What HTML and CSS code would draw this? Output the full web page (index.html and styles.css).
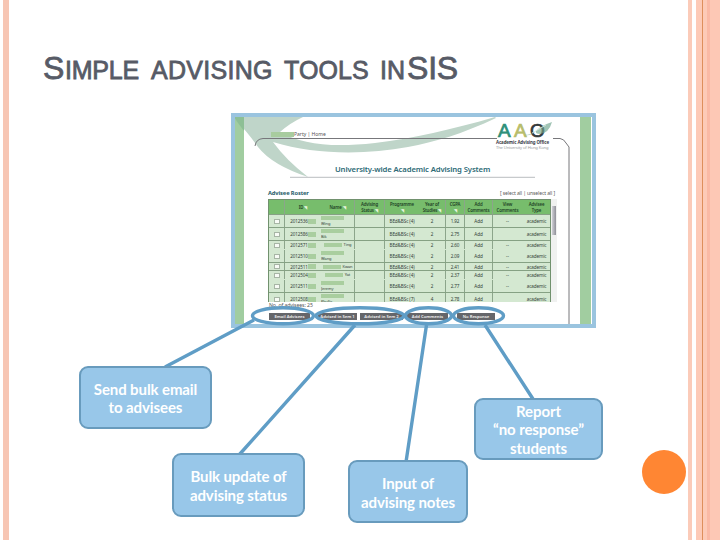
FILE: index.html
```
<!DOCTYPE html>
<html lang="en">
<head>
<meta charset="utf-8">
<title>Simple advising tools in SIS</title>
<link rel="stylesheet" href="styles.css">
</head>
<body>
<div class="slide">
  <div class="rail-left"></div>
  <main class="content">
    <h1><span class="cap">S</span><span class="w1">IMPLE</span><span class="w2">ADVISING</span><span class="w3">TOOLS</span><span class="w4">IN</span><span class="cap sis">SIS</span></h1>
    <section class="shot">
      <div class="strip"></div>
      <svg class="art" width="357" height="207" viewBox="235 117 357 207">
        <path d="M235 117H303Q290 123 280 132C302 144 330 148 375 143C415 138 450 130 495 117L496 118C462 134 435 142 408 147C365 155 315 155 273 142Q286 160 308 177Q272 165 258 147Q249 134 235 119Z" fill="#bfd5c9"/>
        <path d="M235 117h9v14l-9-12z" fill="#8dbf95"/>
        <path d="M255 146Q256 139 263 138.500H497M553 138.500H560Q564 139 566 143L569 147V324" fill="none" stroke="#77777b" stroke-width="1"/>
        <path d="M290 177.300H535" stroke="#a7acae" stroke-width=".8"/>
      </svg>
      <div class="page">
        <header class="top">
          <div class="user"><i></i><span>Party | Home</span></div>
          <div class="brand">
            <div class="logo"><span class="a1">A</span><span class="a2">A</span><span class="o">O</span>
              <svg class="leaf" width="28" height="15" viewBox="0 0 28 15"><path d="M0 13Q8 13 13 8Q18 3 28 0Q25 11 16 12Q11 12 12 9Q8 14 0 13Z" fill="#6fa58e" opacity=".65"/><path d="M8 11L22 3" stroke="#dceee5" stroke-width=".8"/></svg>
            </div>
            <b>Academic Advising Office</b><small>The University of Hong Kong</small>
          </div>
        </header>
        <h2>University-wide Academic Advising System</h2>
        <div class="bar"><b>Advisee Roster</b><span>[ select all | unselect all ]</span></div>
        <div class="listing">
          <div class="roster">
            <div class="row head"><span></span><span>ID <i>◥</i></span><span>Name <i>◥</i></span><span>Advising<br>Status <i>◥</i></span><span>Programme<br><i>◥</i></span><span>Year of<br>Studies <i>◥</i></span><span>CGPA<br><i>◥</i></span><span>Add<br>Comments</span><span>View<br>Comments</span><span>Advisee<br>Type</span></div>
            <div class="row h13"><span><u></u></span><span>2012536<s></s></span><span class="two"><s></s>Wing</span><span></span><span>BEd&amp;BSc (4)</span><span>2</span><span>1.92</span><span>Add</span><span>--</span><span>academic</span></div>
            <div class="row h13"><span><u></u></span><span>2012586<s></s></span><span class="two"><s></s>Bik</span><span></span><span>BEd&amp;BSc (4)</span><span>2</span><span>2.75</span><span>Add</span><span></span><span>academic</span></div>
            <div class="row h9 open"><span><u></u></span><span>2012571<s></s></span><span><s></s>Ting</span><span></span><span>BEd&amp;BSc (4)</span><span>2</span><span>2.60</span><span>Add</span><span>--</span><span>academic</span></div>
            <div class="row h13"><span><u></u></span><span>2012510<s></s></span><span class="two"><s></s>Wang</span><span></span><span>BEd&amp;BSc (4)</span><span>2</span><span>2.09</span><span>Add</span><span>--</span><span>academic</span></div>
            <div class="row h8"><span><u></u></span><span>2012511<s></s></span><span><s></s>Kwan</span><span></span><span>BEd&amp;BSc (4)</span><span>2</span><span>2.41</span><span>Add</span><span>--</span><span>academic</span></div>
            <div class="row h9 open"><span><u></u></span><span>2012504<s></s></span><span><s></s>Yat</span><span></span><span>BEd&amp;BSc (4)</span><span>2</span><span>2.37</span><span>Add</span><span>--</span><span>academic</span></div>
            <div class="row h13"><span><u></u></span><span>2012511<s></s></span><span class="two"><s></s>Jeremy</span><span></span><span>BEd&amp;BSc (4)</span><span>2</span><span>2.77</span><span>Add</span><span>--</span><span>academic</span></div>
            <div class="row h13 open"><span><u></u></span><span>2012508<s></s></span><span class="two"><s></s>Phyllis</span><span></span><span>BEd&amp;BSc (7)</span><span>4</span><span>2.78</span><span>Add</span><span></span><span>academic</span></div>
          </div>
          <div class="scroll"><i></i></div>
        </div>
        <div class="count">No. of advisees: 25</div>
        <div class="actions"><span class="b1">Email Advisees</span><span class="b2">Advised in Sem 1</span><span class="b3">Advised in Sem 2</span><span class="b4">Add Comments</span><span class="b5">No Response</span></div>
      </div>
      <div class="strip right"></div>
    </section>
    <svg class="links" width="720" height="540" viewBox="0 0 720 540">
      <g fill="none" stroke="#5f9dc6" stroke-width="3.400">
        <ellipse cx="283" cy="315.800" rx="30.500" ry="8"/>
        <ellipse cx="360" cy="315.800" rx="44" ry="8"/>
        <ellipse cx="428.500" cy="315.800" rx="23" ry="8"/>
        <ellipse cx="478.500" cy="315.800" rx="25" ry="8"/>
        <path d="M254 320L165 367M355 325L239 455M426.500 325L406 462M485 325L533 399"/>
      </g>
    </svg>
    <div class="note n1">Send bulk email<br>to advisees</div>
    <div class="note n2">Bulk update of<br>advising status</div>
    <div class="note n3">Input of<br>advising notes</div>
    <div class="note n4">Report<br>“no response”<br>students</div>
    <div class="dot"></div>
  </main>
  <div class="rail-right"></div>
</div>
</body>
</html>
```
FILE: styles.css
```
* { box-sizing: border-box; }
body { margin: 0; background: #fff; font-family: "Liberation Sans", Arial, sans-serif; }
.slide { position: relative; display: flex; width: 720px; height: 540px; overflow: hidden; }
.rail-left { width: 9px; flex: none; background: linear-gradient(90deg, #fff 3px, #f7c6b4 3px); }
.rail-right { width: 32px; flex: none; background: linear-gradient(90deg, #fbcbb9 0 4px, #fff 4px 8px, #fdcab7 8px 14px, #de8f5c 14px 15px, #fdcab7 15px 19px, #fab9a5 19px 22px, #fdc8b5 22px); }
.content { flex: 1; padding-left: 34px; }

h1 { display: flex; align-items: baseline; height: 113px; margin: 0; padding-top: 50px; font-size: 25px; line-height: 37px; font-weight: 400; color: #575b66; -webkit-text-stroke: .8px #575b66; white-space: nowrap; }
h1 .cap { font-size: 32px; width: 22px; }
h1 span { flex: none; }
h1 .w1 { width: 86px; letter-spacing: -.2px; }
h1 .w2 { width: 133px; letter-spacing: .3px; }
h1 .w3 { width: 96px; letter-spacing: .1px; }
h1 .w4 { width: 27px; }
h1 .sis { width: 56px; letter-spacing: -.2px; }

.shot { position: relative; display: flex; width: 365px; height: 215px; margin-left: 188px; border: 4px solid #9ac4df; background: #fff; overflow: hidden; }
.art { position: absolute; left: 0; top: 0; }
.strip { flex: none; width: 9px; background: #a1cda0; }
.strip.right { width: 11px; margin-right: 1px; }
.page { position: relative; flex: 1; display: flex; flex-direction: column; padding-left: 24px; font-family: "Noto Sans", sans-serif; }
.top { display: flex; justify-content: space-between; height: 43px; padding: 5px 28px 0 3px; }
.user { display: flex; height: 7px; margin-top: 9px; font-size: 5px; line-height: 7px; color: #555; }
.user i { width: 23px; height: 5px; margin-top: 1px; background: #a8cc9f; }
.brand { display: flex; flex-direction: column; width: 56px; white-space: nowrap; }
.logo { position: relative; display: flex; height: 17px; padding-left: 2px; font: 19px/17px "Liberation Sans", sans-serif; }
.logo span { width: 16px; -webkit-text-stroke: .7px; }
.a1 { color: #2e9079; }
.a2 { color: #b8bd6b; }
.o { color: #33383a; }
.leaf { position: absolute; left: 28px; top: 0; }
.brand b { margin-top: 1px; font: bold 4.400px/5px "Noto Sans", sans-serif; letter-spacing: -.1px; color: #3b4048; }
.brand small { font-size: 4.100px; line-height: 6px; letter-spacing: -.1px; color: #949899; }
h2 { height: 27px; margin: 0; padding-left: 67px; font: 600 7.700px/19px "Noto Sans", sans-serif; letter-spacing: -.12px; color: #2d6a76; white-space: nowrap; }
.bar { display: flex; justify-content: space-between; height: 12px; padding-right: 25px; font-size: 5px; line-height: 13px; letter-spacing: -.1px; color: #555; }
.bar b { color: #1e5a68; font-size: 5.700px; }
.listing { display: flex; height: 103px; }
.roster { width: 283px; height: 103px; overflow: hidden; border: solid #71916e; border-width: .5px 1px 0; background: #d4e8d1; }
.row { display: grid; grid-template-columns: 16px 36px 34px 30px 34px 27px 19px 28px 29px 29px; font-size: 4.600px; line-height: 6px; letter-spacing: -.1px; color: #334238; white-space: nowrap; border-bottom: 1px solid #86a184; }
.row > span { display: flex; align-items: center; justify-content: center; overflow: hidden; }
.row > span:nth-child(1), .row > span:nth-child(3), .row > span:nth-child(4), .row > span:nth-child(6), .row > span:nth-child(7), .row > span:nth-child(8) { border-right: 1px solid #8ca58b; }
.row.open { border-bottom-color: transparent; }
.head { height: 15px; background: #77bd6c; }
.head > span { display: block; padding-top: 2px; text-align: center; font-size: 4.300px; font-weight: 600; line-height: 5.500px; color: #1c3f25; }
.head > span:nth-child(2), .head > span:nth-child(3) { padding-top: 5px; }
.head i { color: #e6f5df; font-style: normal; }
.h13 { height: 13px; }
.h9 { height: 9px; }
.h8 { height: 8px; }
.row u { width: 6px; height: 5px; background: #f8fbf6; border: 1px solid #a7b5a5; }
.row s { width: 8px; height: 5px; background: #a9ce9f; }
.row > span:nth-child(3) { gap: 2px; }
.row > span:nth-child(3) s { width: 18px; height: 4px; }
.row > .two { flex-direction: column; align-items: flex-start; gap: 0; line-height: 6px; }
.row > .two s { flex: none; }
.row > span.two:nth-child(3) { gap: 1px; }
.row > span.two:nth-child(3) s { width: 23px; }
.row:not(.head) > span:nth-child(3) { font-size: 4px; }
.scroll { width: 6px; background: #f0f1f0; padding: 7px 1px 0; }
.scroll i { display: block; height: 29px; background: linear-gradient(90deg, #d1d1d7, #8f8f98); }
.count { height: 10px; font-size: 5.200px; line-height: 7px; color: #555; padding-left: 1px; letter-spacing: -.1px; }
.actions { display: flex; padding: 1px 0 0 1px; height: 9px; font-size: 4.200px; line-height: 7px; color: #f1f1f1; white-space: nowrap; }
.actions span { height: 7px; background: #65666a; text-align: center; overflow: hidden; font-weight: 600; }
.b1 { width: 41px; margin-right: 8px; }
.b2 { width: 39px; margin-right: 3px; }
.b3 { width: 43px; margin-right: 4px; }
.b4 { width: 41px; margin-right: 9px; }
.b5 { width: 38px; }

.links { position: absolute; left: 0; top: 0; }
.note { position: absolute; display: flex; align-items: center; justify-content: center; text-align: center; background: #98c7e9; border: 2px solid #689bbd; border-radius: 9px; color: #fff; font: bold 15px/18.400px Lato, sans-serif; letter-spacing: -.1px; white-space: nowrap; }
.n1 { left: 79px; top: 366px; width: 133px; height: 63px; padding-top: 1px; }
.n2 { left: 172px; top: 453px; width: 133px; height: 64px; padding-top: 1px; }
.n3 { left: 348px; top: 460px; width: 120px; height: 63px; padding-top: 2px; }
.n4 { left: 474px; top: 398px; width: 129px; height: 62px; padding-top: 1px; }
.dot { position: absolute; left: 642px; top: 450px; width: 44px; height: 44px; border-radius: 50%; background: #ff8633; }
```
